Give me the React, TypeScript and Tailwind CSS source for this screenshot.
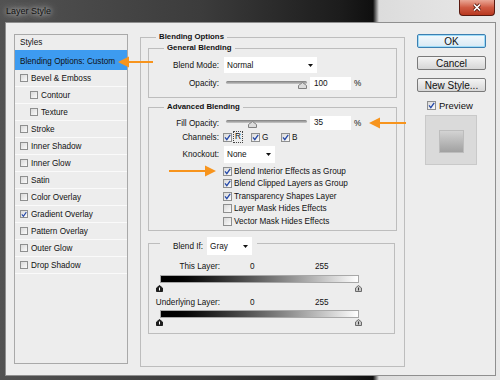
import type { ReactNode } from "react";

type StyleRow = {
  label: string;
  sub?: boolean;
  checked?: boolean;
};

const STYLE_ROWS: StyleRow[] = [
  { label: "Bevel & Emboss" },
  { label: "Contour", sub: true },
  { label: "Texture", sub: true },
  { label: "Stroke" },
  { label: "Inner Shadow" },
  { label: "Inner Glow" },
  { label: "Satin" },
  { label: "Color Overlay" },
  { label: "Gradient Overlay", checked: true },
  { label: "Pattern Overlay" },
  { label: "Outer Glow" },
  { label: "Drop Shadow" },
];

const ADVANCED_OPTIONS = [
  { label: "Blend Interior Effects as Group", checked: true },
  { label: "Blend Clipped Layers as Group", checked: true },
  { label: "Transparency Shapes Layer", checked: true },
  { label: "Layer Mask Hides Effects", checked: false },
  { label: "Vector Mask Hides Effects", checked: false },
];

function Tick() {
  return (
    <svg viewBox="0 0 7 7" className="h-[7px] w-[7px]">
      <path d="M1 3.4 2.8 5.6 6.2 0.8" fill="none" stroke="#2448a8" strokeWidth="1.3" />
    </svg>
  );
}

function CheckBox({ checked = false, small = false }: { checked?: boolean; small?: boolean }) {
  return (
    <span
      className={`flex shrink-0 items-center justify-center border border-[#8e8f8f] bg-gradient-to-br from-[#d9d9d9] to-[#fbfbfb] ${
        small ? "h-[8px] w-[8px]" : "h-[9px] w-[9px]"
      }`}
    >
      {checked ? <Tick /> : null}
    </span>
  );
}

function DownArrow() {
  return (
    <svg viewBox="0 0 5 3" className="h-[3px] w-[5px]">
      <path d="M0 0h5L2.5 3z" fill="#111" />
    </svg>
  );
}

function Select({ value, className }: { value: string; className: string }) {
  return (
    <div className={`flex h-full items-center justify-between bg-white pl-[3px] pr-[4px] ${className}`}>
      <span>{value}</span>
      <DownArrow />
    </div>
  );
}

function Slider({ pos }: { pos: number }) {
  return (
    <div className="relative ml-[7px] h-full w-[81px]">
      <div className="mt-[4px] h-[3px] rounded-full bg-gradient-to-b from-[#7d7d7d] to-[#c9c9c9]" />
      <svg viewBox="0 0 9 7" className="absolute top-[5px] h-[7px] w-[9px]" style={{ left: pos }}>
        <path d="M.5 6.5V3.5L4.5.5l4 3v3z" fill="#dcdcdc" stroke="#808080" />
      </svg>
    </div>
  );
}

function BlendThumb({ dark = false }: { dark?: boolean }) {
  return (
    <svg viewBox="0 0 7 7" className="h-[7px] w-[7px]">
      <path d="M.5 6.5V3L3.5.5l3 2.5v3.5z" fill={dark ? "#1e1e1e" : "#c9c9c9"} stroke={dark ? "#1e1e1e" : "#6a6a6a"} />
      <path d="M3.5 2.5v3" stroke={dark ? "#ffffff" : "#3a3a3a"} />
    </svg>
  );
}

function Group({
  title,
  className,
  titleClass,
  children,
}: {
  title: string;
  className: string;
  titleClass: string;
  children?: ReactNode;
}) {
  return (
    <div className={`border border-[#bdbdbd] ${className}`}>
      <div className={`-mt-[6px] w-fit bg-[#ededed] px-[3px] text-[7.8px] font-bold leading-[10px] ${titleClass}`}>
        {title}
      </div>
      {children}
    </div>
  );
}

function Button({ label, primary = false }: { label: string; primary?: boolean }) {
  return (
    <div
      className={`flex h-[14px] w-[69px] items-center justify-center rounded-[2px] border text-[10px] ${
        primary
          ? "border-[#3c7fb1] bg-gradient-to-b from-[#f3f9fd] to-[#d9e9f4] shadow-[inset_0_0_0_1px_#9fdcf8]"
          : "border-[#7a7a7a] bg-gradient-to-b from-[#f4f4f4] to-[#d6d6d6]"
      }`}
    >
      {label}
    </div>
  );
}

export default function App() {
  return (
    <div className="relative h-[380px] w-[500px] overflow-hidden bg-[linear-gradient(90deg,#525252_0%,#3c3c3c_40%,#1c1c1c_68%,#0f0f0f_74.6%,#dcdcdc_75.8%,#e9e9e9_100%)] font-['Liberation_Sans',sans-serif] text-[#111]">
      <div className="flex h-[22px] items-start justify-between">
        <span className="ml-[6px] mt-[6px] text-[9px] leading-[11px] text-[#111] [text-shadow:0_0_8px_rgba(255,255,255,0.8),0_0_4px_rgba(255,255,255,0.7)]">
          Layer Style
        </span>
        <div className="mr-[5px] flex h-[16px] w-[36px] items-center justify-center rounded-b-[4px] border border-t-0 border-[#5a1a10] bg-gradient-to-b from-[#e9a696] via-[#cf5a43] to-[#b8381f]">
          <svg viewBox="0 0 10 9" className="h-[9px] w-[10px]">
            <path d="M2 1.5l6 6M8 1.5l-6 6" stroke="#5a1a10" strokeWidth="3.2" />
            <path d="M2 1.5l6 6M8 1.5l-6 6" stroke="#ffffff" strokeWidth="1.7" />
          </svg>
        </div>
      </div>

      <div className="ml-[5px] flex h-[354px] w-[491px] items-start border border-[#8f8f8f] bg-[#ededed] text-[8.2px] leading-[11px]">
        {/* styles list */}
        <div className="ml-[8px] mt-[11px] flex h-[330px] w-[114px] flex-col border border-[#a9a9a9]">
          <div className="h-[15px] pl-[5px] leading-[15px]">Styles</div>
          <div className="h-[20px] bg-[#3d9bf0] pl-[5px] pt-[7px] leading-[10px]">Blending Options: Custom</div>
          {STYLE_ROWS.map((row) => (
            <div
              key={row.label}
              className={`flex h-[17px] items-center border-b border-[#fafafa] ${row.sub ? "pl-[15px]" : "pl-[5px]"}`}
            >
              <CheckBox small checked={row.checked} />
              <span className="ml-[3px]">{row.label}</span>
            </div>
          ))}
        </div>

        {/* blending options */}
        <Group title="Blending Options" className="ml-[12px] mt-[14px] h-[330px] w-[265px] px-[7px]" titleClass="ml-[8px]">
          <Group title="General Blending" className="mt-[6px] h-[50px] w-[249px]" titleClass="ml-[15px]">
            <div className="mt-[4px] flex h-[16px] items-center">
              <span className="w-[70px] text-right">Blend Mode:</span>
              <Select value="Normal" className="ml-[5px] w-[93px]" />
            </div>
            <div className="mt-[4px] flex h-[13px] items-center">
              <span className="w-[70px] text-right">Opacity:</span>
              <Slider pos={72} />
              <div className="ml-[3px] h-full w-[41px] bg-white pl-[4px] leading-[13px]">100</div>
              <span className="ml-[3px]">%</span>
            </div>
          </Group>

          <Group title="Advanced Blending" className="mt-[9px] h-[124px] w-[249px]" titleClass="ml-[15px]">
            <div className="mt-[4px] flex h-[14px] items-center">
              <span className="w-[70px] text-right">Fill Opacity:</span>
              <Slider pos={22} />
              <div className="ml-[3px] h-full w-[41px] bg-white pl-[4px] leading-[14px]">35</div>
              <span className="ml-[3px]">%</span>
            </div>
            <div className="mt-[1px] flex h-[12px] items-center">
              <span className="w-[70px] text-right">Channels:</span>
              <div className="ml-[4px] flex w-[28px] items-center">
                <CheckBox checked />
                <span className="ml-[1px] border border-dotted border-[#444] px-[1px] leading-[10px]">R</span>
              </div>
              <div className="flex w-[30px] items-center">
                <CheckBox checked />
                <span className="ml-[2px]">G</span>
              </div>
              <div className="flex items-center">
                <CheckBox checked />
                <span className="ml-[2px]">B</span>
              </div>
            </div>
            <div className="mt-[3px] flex h-[17px] items-center">
              <span className="w-[70px] text-right">Knockout:</span>
              <Select value="None" className="ml-[5px] w-[51px]" />
            </div>
            <div className="mt-[2px]">
              {ADVANCED_OPTIONS.map((opt) => (
                <div key={opt.label} className="flex h-[12.5px] items-center pl-[74px]">
                  <CheckBox checked={opt.checked} />
                  <span className="ml-[2px]">{opt.label}</span>
                </div>
              ))}
            </div>
          </Group>

          <div className="mt-[12px] h-[91px] w-[247px] border border-[#bdbdbd]">
            <div className="-mt-[7px] ml-[11px] flex h-[18px] w-fit items-center bg-[#ededed] pl-[13px] pr-[5px]">
              <span>Blend If:</span>
              <Select value="Gray" className="ml-[4px] w-[45px]" />
            </div>
            <div className="mt-[5px] flex h-[12px] items-center">
              <span className="w-[71px] text-right">This Layer:</span>
              <span className="ml-[30px] w-[65px]">0</span>
              <span>255</span>
            </div>
            <div className="ml-[11px] mt-[3px] h-[8px] w-[199px] border border-[#a8a8a8] bg-gradient-to-r from-black to-white" />
            <div className="ml-[7px] mt-[2px] flex h-[7px] w-[206px] justify-between">
              <BlendThumb dark />
              <BlendThumb />
            </div>
            <div className="mt-[4px] flex h-[12px] items-center">
              <span className="w-[71px] text-right">Underlying Layer:</span>
              <span className="ml-[30px] w-[65px]">0</span>
              <span>255</span>
            </div>
            <div className="ml-[11px] mt-[2px] h-[8px] w-[199px] border border-[#a8a8a8] bg-gradient-to-r from-black to-white" />
            <div className="ml-[7px] mt-[1px] flex h-[7px] w-[206px] justify-between">
              <BlendThumb dark />
              <BlendThumb />
            </div>
          </div>
        </Group>

        {/* buttons */}
        <div className="ml-[12px] mt-[11px] flex w-[69px] flex-col">
          <Button label="OK" primary />
          <div className="mt-[8px]">
            <Button label="Cancel" />
          </div>
          <div className="mt-[8px]">
            <Button label="New Style..." />
          </div>
          <div className="mt-[9px] flex h-[9px] items-center pl-[10px]">
            <CheckBox checked />
            <span className="ml-[3px] text-[9.5px]">Preview</span>
          </div>
          <div className="ml-[8px] mt-[5px] h-[50px] w-[52px] border border-[#c9c9c9] bg-[#dadada] pt-[14px]">
            <div className="mx-auto h-[23px] w-[25px] border border-[#bdbdbd] bg-gradient-to-b from-[#d3d3d3] to-[#a1a1a1]" />
          </div>
        </div>
      </div>

      <svg viewBox="0 0 500 380" className="pointer-events-none absolute inset-0 h-[380px] w-[500px]">
        <g fill="#f7941d" stroke="#f7941d">
          <path d="M128 62h25" strokeWidth="2" />
          <path d="M118 62l11-5.5v11z" stroke="none" />
          <path d="M379 123h27" strokeWidth="2" />
          <path d="M369 123l11-5.5v11z" stroke="none" />
          <path d="M169 171h37" strokeWidth="2" />
          <path d="M216 171l-11-5.5v11z" stroke="none" />
        </g>
      </svg>
    </div>
  );
}
